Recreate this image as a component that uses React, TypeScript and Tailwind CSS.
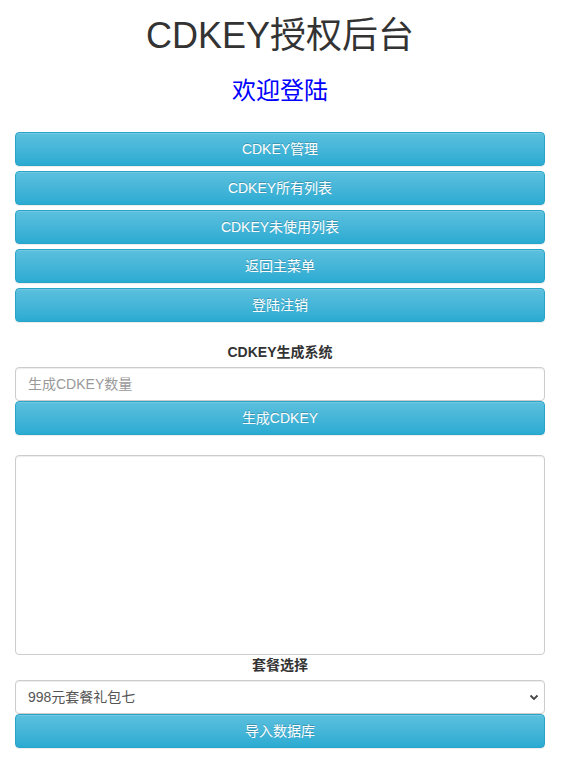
import React from "react";

const btn =
  "block w-full h-[34px] rounded-[4px] border border-[#28a4c9] bg-gradient-to-b from-[#5bc0de] to-[#2aabd2] text-white text-[14px] leading-[20px] [text-shadow:0_-1px_0_rgba(0,0,0,0.2)] shadow-[inset_0_1px_0_rgba(255,255,255,0.15),0_1px_1px_rgba(0,0,0,0.075)]";

export default function App() {
  return (
    <div
      className="w-[560px] px-[15px] pb-[28px] bg-white text-[#333] text-[14px] leading-[20px]"
      style={{ fontFamily: '"Liberation Sans", Arial, "Noto Sans CJK SC", sans-serif' }}
    >
      <h1 className="pt-[16px] text-center text-[36px] leading-[40px] font-normal text-[#333]">
        CDKEY授权后台
      </h1>
      <h3 className="mt-[22px] text-center text-[24px] leading-[26px] font-normal text-[#0000ff]">
        欢迎登陆
      </h3>

      <div className="mt-[28px] flex flex-col gap-[5px]">
        <button className={btn}>CDKEY管理</button>
        <button className={btn}>CDKEY所有列表</button>
        <button className={btn}>CDKEY未使用列表</button>
        <button className={btn}>返回主菜单</button>
        <button className={btn}>登陆注销</button>
      </div>

      <div className="mt-[20px] text-center font-bold leading-[20px] mb-[5px]">CDKEY生成系统</div>
      <input
        className="block w-full h-[34px] px-[12px] rounded-[4px] border border-[#ccc] text-[14px] text-[#555] placeholder:text-[#999] shadow-[inset_0_1px_1px_rgba(0,0,0,0.075)] outline-none"
        placeholder="生成CDKEY数量"
      />
      <button className={btn}>生成CDKEY</button>

      <textarea className="mt-[20px] block w-full h-[200px] rounded-[4px] border border-[#ccc] shadow-[inset_0_1px_1px_rgba(0,0,0,0.075)] resize-none outline-none" />

      <div className="text-center font-bold leading-[20px] mb-[5px]">套餐选择</div>
      <div className="relative">
        <select className="block w-full h-[34px] pl-[12px] pr-[30px] appearance-none rounded-[4px] border border-[#ccc] bg-white text-[14px] text-[#555] shadow-[inset_0_1px_1px_rgba(0,0,0,0.075)] outline-none">
          <option>998元套餐礼包七</option>
        </select>
        <svg
          className="absolute right-[6px] top-[14px] pointer-events-none"
          width="10"
          height="7"
          viewBox="0 0 10 7"
        >
          <path d="M1.5 1.5 L5 5 L8.5 1.5" fill="none" stroke="#444" strokeWidth="1.8" />
        </svg>
      </div>
      <button className={btn}>导入数据库</button>
    </div>
  );
}
